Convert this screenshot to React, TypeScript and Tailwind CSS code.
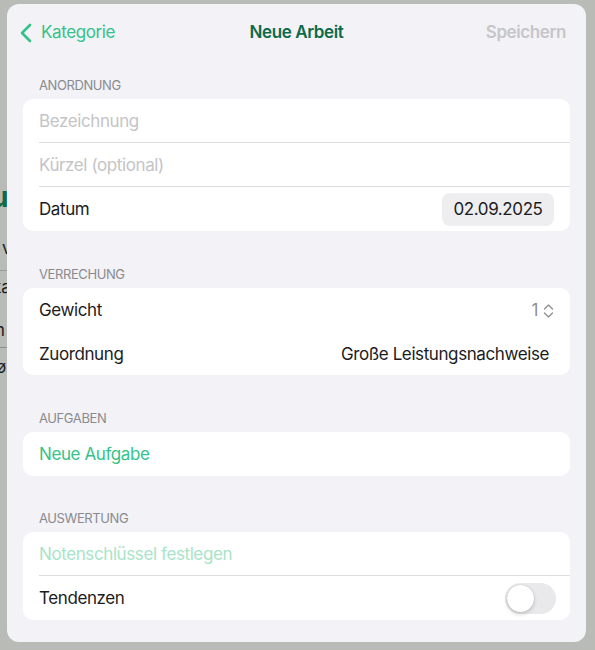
import { useState } from "react";

const font = { fontFamily: "Inter, 'Noto Sans', sans-serif" };

function SectionHeader({ title, height }: { title: string; height: string }) {
  return (
    <div className={`flex items-end px-4 pb-[6px] ${height}`}>
      <span className="pl-4 text-[13px] leading-4 text-[#8a8a8e]">{title}</span>
    </div>
  );
}

function Row({
  children,
  divider,
  height = "h-[44px]",
}: {
  children: React.ReactNode;
  divider?: boolean;
  height?: string;
}) {
  return (
    <div className={`pl-4 ${height}`}>
      <div
        className={`flex h-full items-center justify-between pr-4 pt-[2px] ${
          divider ? "border-b border-[#dcdce0]" : ""
        }`}
      >
        {children}
      </div>
    </div>
  );
}

function UpDown() {
  return (
    <svg width="11" height="16" viewBox="0 0 11 16" fill="none" className="ml-[5px]">
      <path d="M1.5 6 L5.5 2 L9.5 6" stroke="#8e8e93" strokeWidth="1.3" strokeLinecap="round" strokeLinejoin="round" />
      <path d="M1.5 10 L5.5 14 L9.5 10" stroke="#8e8e93" strokeWidth="1.3" strokeLinecap="round" strokeLinejoin="round" />
    </svg>
  );
}

function Toggle() {
  const [on, setOn] = useState(false);
  return (
    <button
      onClick={() => setOn(!on)}
      className={`mr-[-2px] mt-[-2px] flex h-[31px] w-[51px] items-center rounded-full p-[2px] ${
        on ? "justify-end bg-[#34c38a]" : "justify-start bg-[#e9e9eb]"
      }`}
    >
      <span className="h-[27px] w-[27px] rounded-full bg-white shadow-[0_2px_4px_rgba(0,0,0,0.18),0_0_1px_rgba(0,0,0,0.2)]" />
    </button>
  );
}

export default function App() {
  return (
    <div className="flex h-[650px] w-[595px] bg-[#b9bbb7] pt-[4px]" style={font}>
      {/* background content peeking out behind the sheet */}
      <div className="relative h-full w-[7px] overflow-hidden">
        <span className="absolute left-[-9px] top-[172px] text-[28px] font-bold text-[#0d6b48]">u</span>
        <span className="absolute left-[2px] top-[232px] text-[17px] text-[#1c1c1e]">v</span>
        <div className="absolute left-0 top-[266px] h-px w-full bg-[#9a9c98]" />
        <span className="absolute left-[-8px] top-[271px] text-[17px] text-[#1c1c1e]">ka</span>
        <span className="absolute left-[-10px] top-[314px] text-[17px] text-[#1c1c1e]">m</span>
        <div className="absolute left-0 top-[343px] h-px w-full bg-[#8f918d]" />
        <span className="absolute left-[-4px] top-[351px] text-[17px] text-[#1c1c1e]">ø</span>
      </div>

      <div className="flex h-[638px] w-[579px] flex-col rounded-[12px] bg-[#f2f2f7] tracking-[-0.4px]">
        {/* nav bar */}
        <div className="grid h-[56px] grid-cols-3 items-center px-[13px] pt-[2px]">
          <div className="flex items-center text-[17px] text-[#35c28a]">
            <svg width="12" height="20" viewBox="0 0 12 20" fill="none" className="mr-[9px]">
              <path d="M10 2 L2 10 L10 18" stroke="#35c28a" strokeWidth="2.6" strokeLinecap="round" strokeLinejoin="round" />
            </svg>
            <span>Kategorie</span>
          </div>
          <div className="text-center text-[17px] font-semibold text-[#0d6b48]">Neue Arbeit</div>
          <div className="pr-[7px] text-right text-[17px] font-semibold text-[#c6c6ca]">Speichern</div>
        </div>

        <SectionHeader title="ANORDNUNG" height="h-[39px]" />
        <div className="mx-4 overflow-hidden rounded-[10px] bg-white text-[17px]">
          <Row divider>
            <span className="text-[#c4c4c7]">Bezeichnung</span>
          </Row>
          <Row divider>
            <span className="text-[#c4c4c7]">Kürzel (optional)</span>
          </Row>
          <Row>
            <span className="text-[#1c1c1e]">Datum</span>
            <span className="mt-[-2px] flex h-[33px] w-[112px] items-center justify-center rounded-[8px] bg-[#eeeef0] pt-[2px] text-[#1c1c1e]">
              02.09.2025
            </span>
          </Row>
        </div>

        <SectionHeader title="VERRECHUNG" height="h-[57px]" />
        <div className="mx-4 overflow-hidden rounded-[10px] bg-white text-[17px]">
          <Row>
            <span className="text-[#1c1c1e]">Gewicht</span>
            <span className="flex items-center text-[#8e8e93]">
              1
              <UpDown />
            </span>
          </Row>
          <Row height="h-[43px]">
            <span className="text-[#1c1c1e]">Zuordnung</span>
            <span className="mr-[5px] text-[#1c1c1e]">Große Leistungsnachweise</span>
          </Row>
        </div>

        <SectionHeader title="AUFGABEN" height="h-[57px]" />
        <div className="mx-4 overflow-hidden rounded-[10px] bg-white text-[17px]">
          <Row>
            <span className="text-[#34c38a]">Neue Aufgabe</span>
          </Row>
        </div>

        <SectionHeader title="AUSWERTUNG" height="h-[56px]" />
        <div className="mx-4 overflow-hidden rounded-[10px] bg-white text-[17px]">
          <Row divider>
            <span className="text-[#a8e4c8]">Notenschlüssel festlegen</span>
          </Row>
          <Row>
            <span className="text-[#1c1c1e]">Tendenzen</span>
            <Toggle />
          </Row>
        </div>
      </div>
    </div>
  );
}
